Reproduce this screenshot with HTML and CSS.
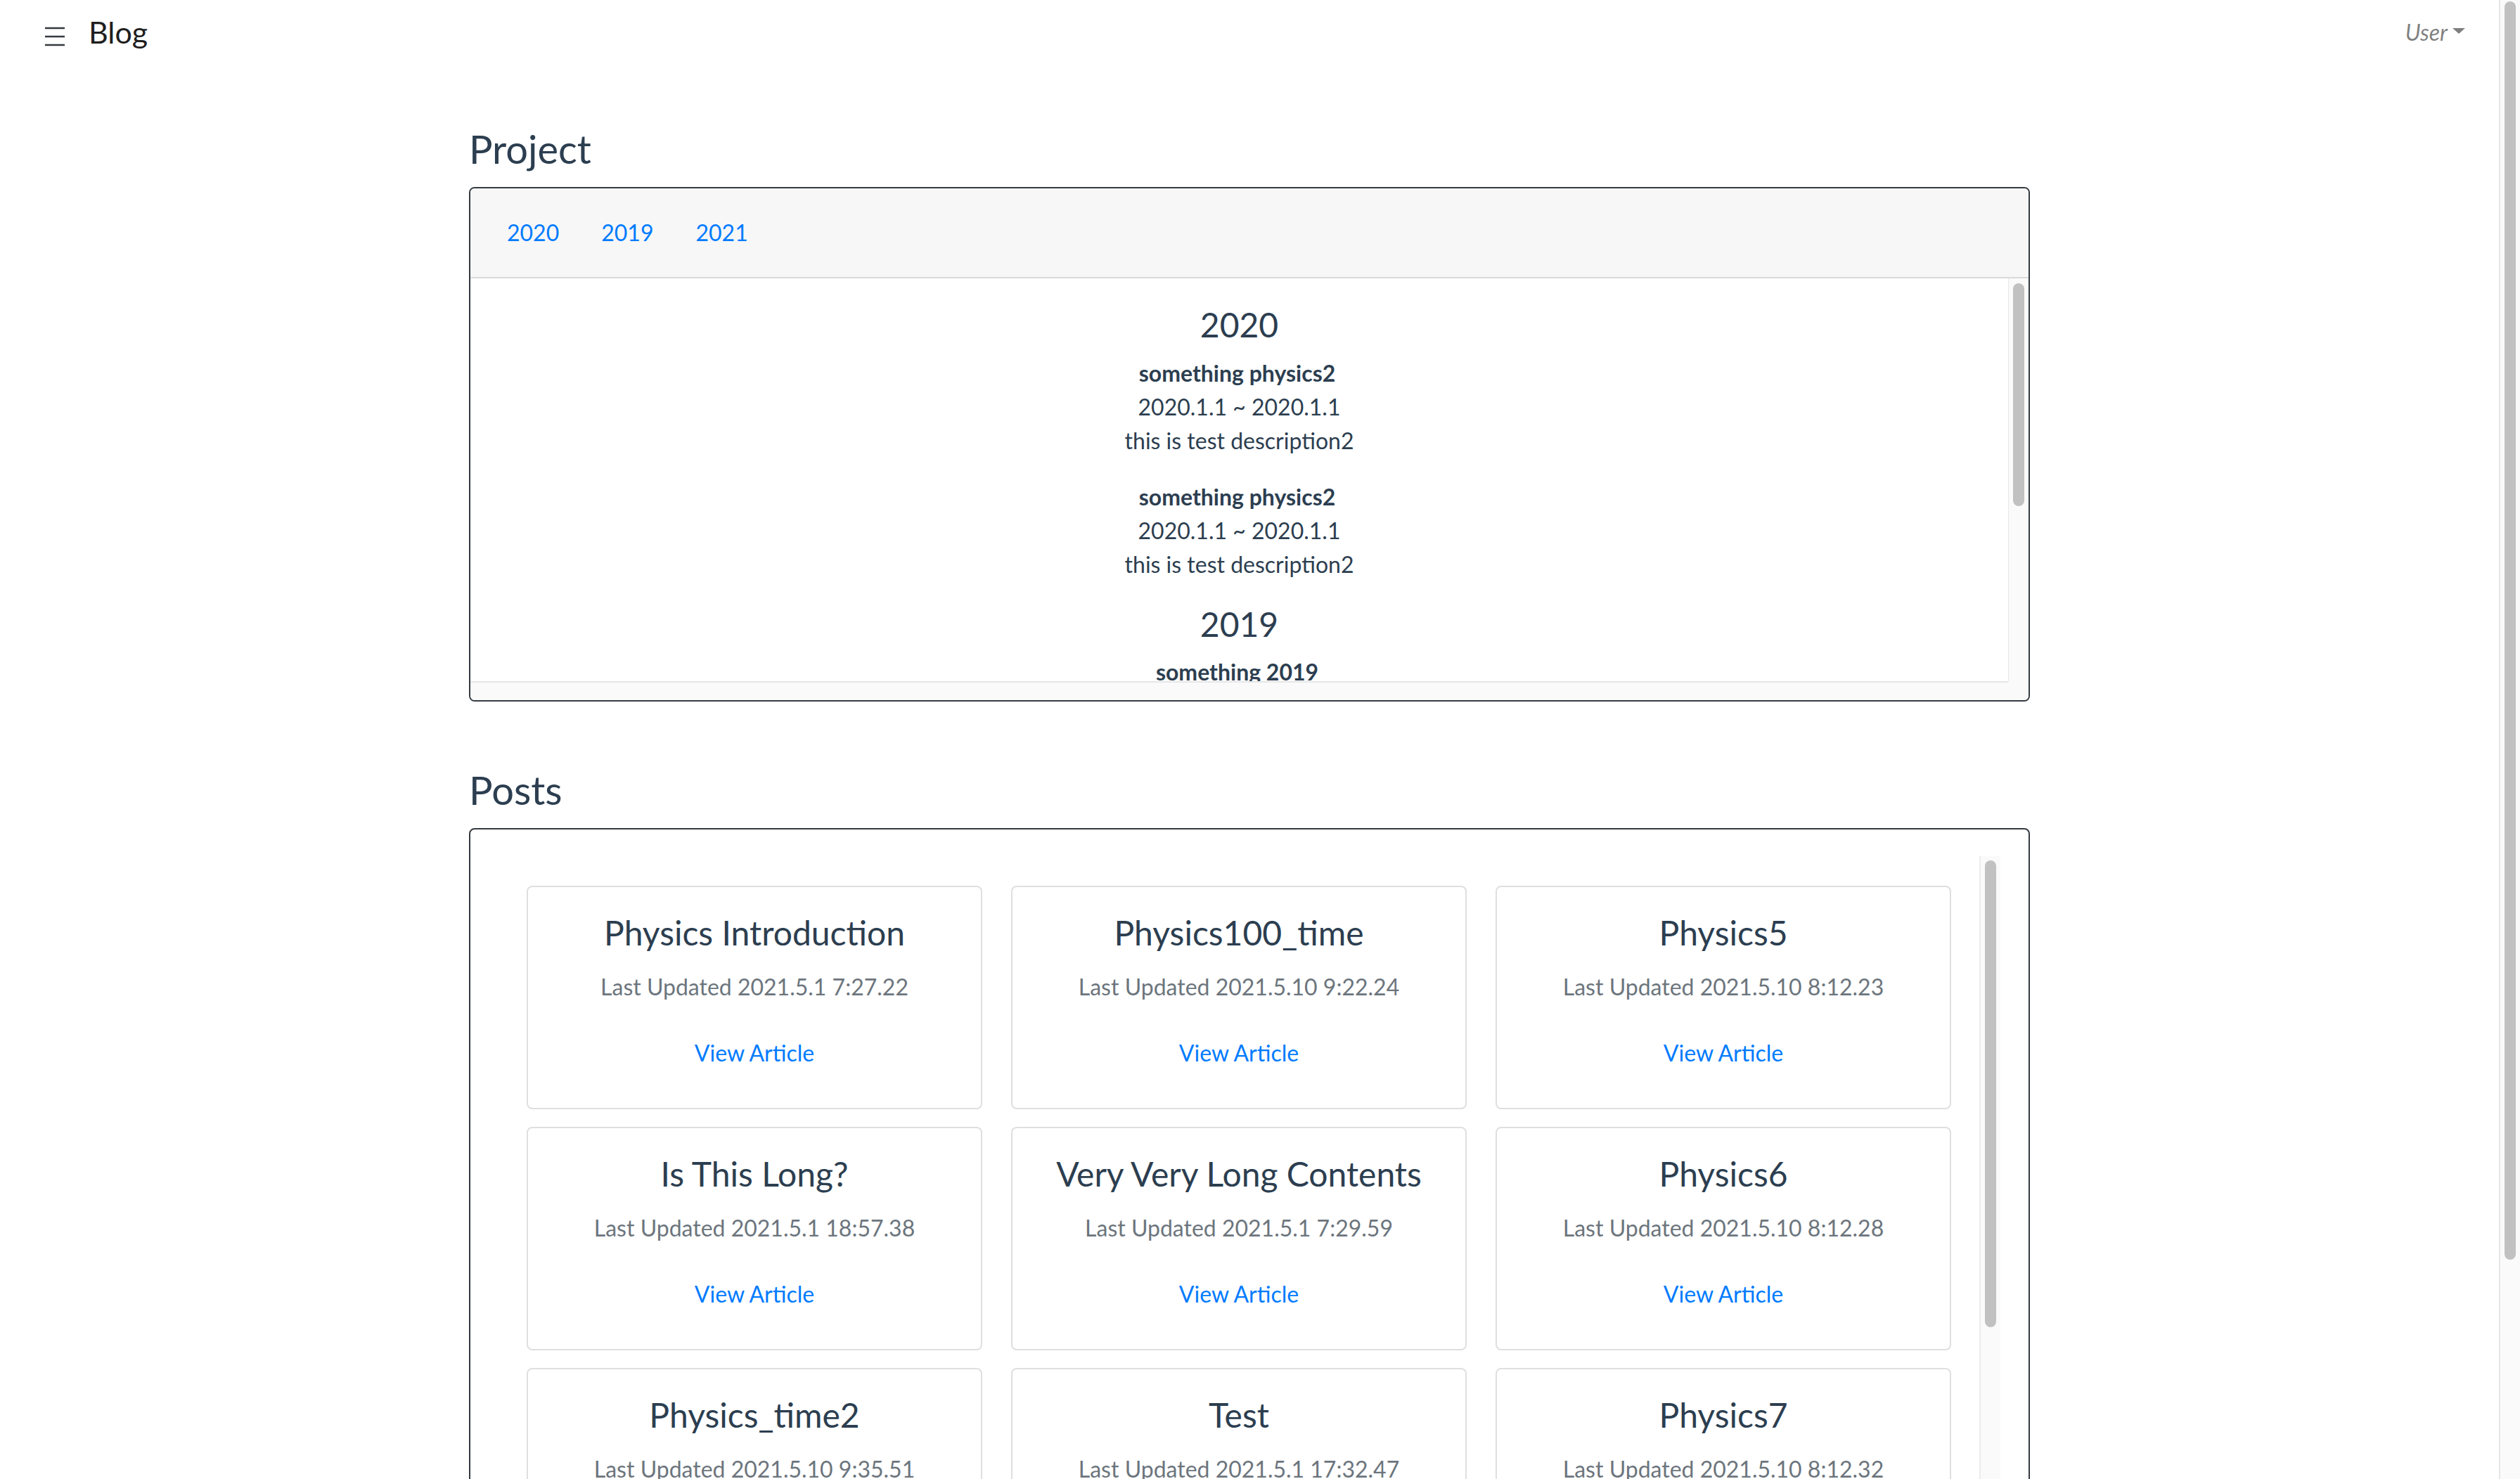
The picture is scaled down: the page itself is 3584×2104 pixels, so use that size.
FILE: index.html
```html
<!DOCTYPE html>
<html lang="en">
<head>
<meta charset="utf-8">
<title>Blog</title>
<link rel="stylesheet" href="styles.css">
</head>
<body>
<div class="page">
  <nav class="navbar">
    <svg class="toggler" width="28" height="30" viewBox="0 0 28 30" aria-hidden="true">
      <line x1="0" y1="3" x2="28" y2="3" stroke="#343a40" stroke-width="2.6" stroke-linecap="round"/>
      <line x1="0" y1="15" x2="28" y2="15" stroke="#343a40" stroke-width="2.6" stroke-linecap="round"/>
      <line x1="0" y1="27" x2="28" y2="27" stroke="#343a40" stroke-width="2.6" stroke-linecap="round"/>
    </svg>
    <a class="brand">Blog</a>
    <a class="user">User<span class="caret"></span></a>
  </nav>

  <main class="container">
    <section class="section">
      <h3 class="section-title">Project</h3>
      <div class="panel">
        <div class="panel-header">
          <a class="tab">2020</a>
          <a class="tab">2019</a>
          <a class="tab">2021</a>
        </div>
        <div class="scrollbox project-scroll">
          <div class="scroll-content project-content">
            <h4 class="year">2020</h4>
            <div class="item">
              <div class="item-name">something physics2</div>
              <div>2020.1.1 ~ 2020.1.1</div>
              <div>this is test description2</div>
            </div>
            <div class="item">
              <div class="item-name">something physics2</div>
              <div>2020.1.1 ~ 2020.1.1</div>
              <div>this is test description2</div>
            </div>
            <h4 class="year">2019</h4>
            <div class="item">
              <div class="item-name">something 2019</div>
            </div>
          </div>
          <div class="vtrack project-vtrack"><div class="thumb project-thumb"></div></div>
          <div class="htrack"></div>
          <div class="corner"></div>
        </div>
      </div>
    </section>

    <section class="section posts-section">
      <h3 class="section-title">Posts</h3>
      <div class="panel posts-panel">
        <div class="scrollbox posts-scroll">
          <div class="scroll-content cards">
            <div class="card">
              <h4 class="card-title">Physics Introduction</h4>
              <p class="card-date">Last Updated 2021.5.1 7:27.22</p>
              <a class="card-link">View Article</a>
            </div>
            <div class="card">
              <h4 class="card-title">Physics100_time</h4>
              <p class="card-date">Last Updated 2021.5.10 9:22.24</p>
              <a class="card-link">View Article</a>
            </div>
            <div class="card">
              <h4 class="card-title">Physics5</h4>
              <p class="card-date">Last Updated 2021.5.10 8:12.23</p>
              <a class="card-link">View Article</a>
            </div>
            <div class="card">
              <h4 class="card-title">Is This Long?</h4>
              <p class="card-date">Last Updated 2021.5.1 18:57.38</p>
              <a class="card-link">View Article</a>
            </div>
            <div class="card">
              <h4 class="card-title">Very Very Long Contents</h4>
              <p class="card-date">Last Updated 2021.5.1 7:29.59</p>
              <a class="card-link">View Article</a>
            </div>
            <div class="card">
              <h4 class="card-title">Physics6</h4>
              <p class="card-date">Last Updated 2021.5.10 8:12.28</p>
              <a class="card-link">View Article</a>
            </div>
            <div class="card">
              <h4 class="card-title">Physics_time2</h4>
              <p class="card-date">Last Updated 2021.5.10 9:35.51</p>
              <a class="card-link">View Article</a>
            </div>
            <div class="card">
              <h4 class="card-title">Test</h4>
              <p class="card-date">Last Updated 2021.5.1 17:32.47</p>
              <a class="card-link">View Article</a>
            </div>
            <div class="card">
              <h4 class="card-title">Physics7</h4>
              <p class="card-date">Last Updated 2021.5.10 8:12.32</p>
              <a class="card-link">View Article</a>
            </div>
          </div>
          <div class="vtrack posts-vtrack"><div class="thumb posts-thumb"></div></div>
        </div>
      </div>
    </section>
  </main>
</div>
<div class="page-scrollbar"><div class="page-thumb"></div></div>
</body>
</html>
```

FILE: styles.css
```css
html, body {
  margin: 0;
  padding: 0;
  height: 100%;
  overflow: hidden;
  background: #fff;
}

body {
  display: flex;
  font-family: Lato, "Open Sans", "Liberation Sans", sans-serif;
  color: #2c3e50;
  font-size: 32px;
  line-height: 48px;
}

.page {
  flex: 1;
  min-width: 0;
  overflow: hidden;
}

/* Navbar */
.navbar {
  display: flex;
  align-items: flex-start;
  height: 100px;
  padding: 0 48px 0 64px;
}

.toggler {
  display: block;
  margin-top: 37px;
}

.brand {
  margin-left: 34px;
  margin-top: 20px;
  font-size: 43px;
  line-height: 1.2;
  color: rgba(0, 0, 0, 0.9);
}

.user {
  margin-left: auto;
  margin-top: 27px;
  font-size: 32px;
  line-height: 1.2;
  font-style: italic;
  color: rgba(0, 0, 0, 0.5);
}

.caret {
  display: inline-block;
  margin-left: 7px;
  vertical-align: 0.32em;
  border-top: 8px solid rgba(0, 0, 0, 0.5);
  border-left: 9px solid transparent;
  border-right: 9px solid transparent;
}

/* Layout */
.container {
  width: 2220px;
  margin: 0 auto;
  padding-top: 78px;
}

.posts-section {
  margin-top: 92px;
}

.section-title {
  margin: 0 0 21px;
  font-size: 56px;
  line-height: 1.2;
  font-weight: 400;
  color: #2c3e50;
}

/* Panels */
.panel {
  border: 2px solid #343a40;
  border-radius: 8px;
  overflow: hidden;
  background: #fff;
}

.panel-header {
  display: flex;
  align-items: center;
  height: 126px;
  padding-left: 22px;
  background: #f7f7f7;
  border-bottom: 2px solid #dadada;
}

.tab {
  padding: 0 30px;
  color: #007bff;
  font-size: 32px;
  line-height: 48px;
}

.scrollbox {
  display: grid;
}

.project-scroll {
  grid-template-columns: 1fr 29px;
  grid-template-rows: 573px 27px;
}

.scroll-content {
  overflow: hidden;
  min-width: 0;
}

.project-content {
  padding-top: 37px;
  text-align: center;
  box-sizing: border-box;
}

.year {
  margin: 0 0 16px;
  font-size: 48px;
  line-height: 1.2;
  font-weight: 400;
}

.item {
  margin-bottom: 32px;
}

.item-name {
  font-weight: 700;
  padding-right: 6px;
}

.vtrack {
  background: #fafafa;
  border-left: 1px solid #e6e6e6;
  box-sizing: border-box;
}

.htrack {
  background: #fafafa;
  border-top: 2px solid #e6e6e6;
}

.corner {
  background: #fafafa;
}

.thumb {
  width: 16px;
  margin-left: 6px;
  border-radius: 8px;
  background: #c1c1c1;
}

.project-thumb {
  margin-top: 7px;
  height: 317px;
}

/* Posts */
.posts-panel {
  padding: 38px 40px 40px;
}

.posts-scroll {
  grid-template-columns: 1fr 30px;
  height: 1300px;
}

.posts-vtrack {
  border-left: 2px solid #ececec;
}

.posts-thumb {
  margin-top: 6px;
  height: 664px;
}

.cards {
  display: grid;
  grid-template-columns: repeat(3, 1fr);
  column-gap: 41px;
  row-gap: 25px;
  align-content: start;
  padding: 42px 40px 0;
}

.card {
  height: 318px;
  box-sizing: border-box;
  padding: 36px 20px 0;
  border: 2px solid #dfdfdf;
  border-radius: 8px;
  text-align: center;
}

.card-title {
  margin: 0 0 24px;
  font-size: 48px;
  line-height: 1.2;
  font-weight: 400;
  color: #2c3e50;
}

.card-date {
  margin: 0 0 46px;
  color: #6c757d;
}

.card-link {
  color: #007bff;
}

/* Page scrollbar */
.page-scrollbar {
  width: 30px;
  height: 100vh;
  flex: none;
  box-sizing: border-box;
  background: #fafafa;
  border-left: 2px solid #e6e6e6;
}

.page-thumb {
  width: 16px;
  height: 1790px;
  margin: 2px 0 0 6px;
  border-radius: 8px;
  background: #c1c1c1;
}
```
